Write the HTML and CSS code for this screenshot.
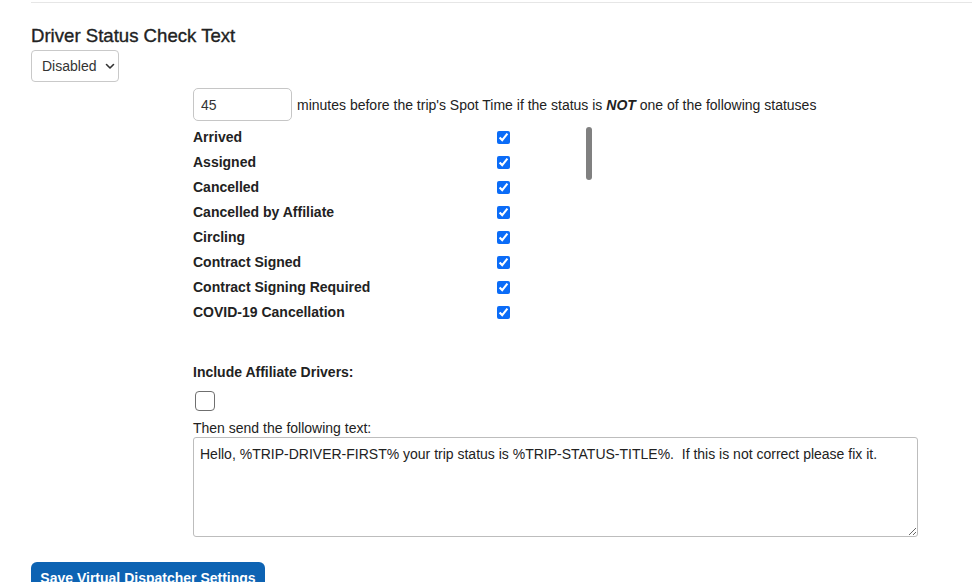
FILE: index.html
```html
<!DOCTYPE html>
<html>
<head>
<meta charset="utf-8">
<link rel="stylesheet" href="styles.css">
</head>
<body>
<div class="page">
  <div class="rule"></div>
  <h3 class="title">Driver Status Check Text</h3>
  <div class="select-wrap">
    <select class="select"><option>Disabled</option><option>Enabled</option></select>
    <svg class="chev" width="10" height="7" viewBox="0 0 10 7"><path d="M1.5 1.5 L5 5 L8.5 1.5" fill="none" stroke="#333" stroke-width="1.6" stroke-linecap="round" stroke-linejoin="round"/></svg>
  </div>
  <div class="indent">
    <div class="minutes-row">
      <input class="minutes" type="text" value="45">
      <span class="minutes-text">minutes before the trip's Spot Time if the status is <b><i>NOT</i></b> one of the following statuses</span>
    </div>
    <div class="status-wrap">
      <div class="status-box">
        <table class="status-table">
          <tr><td class="lbl">Arrived</td><td><input type="checkbox" checked></td></tr>
          <tr><td class="lbl">Assigned</td><td><input type="checkbox" checked></td></tr>
          <tr><td class="lbl">Cancelled</td><td><input type="checkbox" checked></td></tr>
          <tr><td class="lbl">Cancelled by Affiliate</td><td><input type="checkbox" checked></td></tr>
          <tr><td class="lbl">Circling</td><td><input type="checkbox" checked></td></tr>
          <tr><td class="lbl">Contract Signed</td><td><input type="checkbox" checked></td></tr>
          <tr><td class="lbl">Contract Signing Required</td><td><input type="checkbox" checked></td></tr>
          <tr><td class="lbl">COVID-19 Cancellation</td><td><input type="checkbox" checked></td></tr>
        </table>
      </div>
      <div class="thumb"></div>
    </div>
    <div class="aff-label">Include Affiliate Drivers:</div>
    <input class="aff-check" type="checkbox">
    <div class="send-label">Then send the following text:</div>
    <textarea class="msg">Hello, %TRIP-DRIVER-FIRST% your trip status is %TRIP-STATUS-TITLE%.  If this is not correct please fix it.</textarea>
  </div>
  <button class="save">Save Virtual Dispatcher Settings</button>
</div>
</body>
</html>
```

FILE: styles.css
```css
html, body {
  margin: 0;
  padding: 0;
  background: #fff;
}
body {
  font-family: "Liberation Sans", Arial, sans-serif;
  color: #222;
  font-size: 14px;
}
.page {
  padding-left: 31px;
  height: 582px;
  overflow: hidden;
}
.rule {
  margin-top: 2px;
  height: 0;
  border-top: 1px solid #e6e6e6;
}
.title {
  margin: 22px 0 0 0;
  font-size: 18.6px;
  line-height: 22px;
  font-weight: normal;
  -webkit-text-stroke: 0.35px #222;
  color: #222;
}
.select-wrap {
  position: relative;
  width: 88px;
  height: 32px;
  margin-top: 3px;
}
.select {
  appearance: none;
  -webkit-appearance: none;
  width: 88px;
  height: 32px;
  border: 1px solid #c9c9c9;
  border-radius: 4px;
  background: #fff;
  font-family: "Liberation Sans", Arial, sans-serif;
  font-size: 14px;
  color: #333;
  padding: 0 0 0 10px;
  margin: 0;
}
.chev {
  position: absolute;
  right: 4px;
  top: 13px;
  pointer-events: none;
}
.indent {
  padding-left: 162px;
}
.minutes-row {
  display: flex;
  align-items: center;
  margin-top: 6px;
  height: 33px;
}
.minutes {
  box-sizing: border-box;
  width: 99px;
  height: 33px;
  border: 1px solid #c6c6c6;
  border-radius: 5px;
  padding: 0 0 0 7px;
  font-family: "Liberation Sans", Arial, sans-serif;
  font-size: 14px;
  color: #333;
  margin: 0;
}
.minutes-text {
  margin-left: 5px;
  color: #222;
}
.status-wrap {
  position: relative;
  margin-top: 4px;
  width: 402px;
  height: 200px;
}
.status-box {
  height: 200px;
  overflow: hidden;
}
.thumb {
  position: absolute;
  left: 393px;
  top: 2px;
  width: 6px;
  height: 53px;
  border-radius: 3px;
  background: #808080;
}
.status-table {
  border-collapse: collapse;
}
.status-table td {
  padding: 0;
  height: 25px;
  line-height: 17px;
  vertical-align: middle;
}
.status-table .lbl {
  width: 304px;
  font-weight: bold;
  color: #222;
}
.status-table input {
  display: block;
  width: 13px;
  height: 13px;
  margin: 0;
  accent-color: #0b6cf7;
}
.aff-label {
  margin-top: 37px;
  line-height: 20px;
  font-weight: bold;
  color: #222;
}
.aff-check {
  appearance: none;
  -webkit-appearance: none;
  display: block;
  box-sizing: border-box;
  width: 20px;
  height: 20px;
  margin: 9px 0 0 2px;
  border: 1px solid #6f6f6f;
  border-radius: 4px;
  background: #fff;
}
.send-label {
  margin-top: 9px;
  line-height: 16px;
  color: #222;
}
.msg {
  display: block;
  box-sizing: border-box;
  width: 725px;
  height: 100px;
  margin: 1px 0 0 0;
  border: 1px solid #bdbdbd;
  border-radius: 3px;
  padding: 8px 6px;
  font-family: "Liberation Sans", Arial, sans-serif;
  font-size: 14px;
  line-height: 16px;
  color: #222;
  resize: both;
}
.save {
  display: block;
  margin-top: 25px;
  width: 234px;
  height: 38px;
  border: none;
  border-radius: 6px;
  background: #0d63b3;
  color: #fff;
  font-family: "Liberation Sans", Arial, sans-serif;
  font-size: 14px;
  font-weight: bold;
  text-align: center;
  line-height: 16px;
  padding: 0 0 6px 0;
}
```
